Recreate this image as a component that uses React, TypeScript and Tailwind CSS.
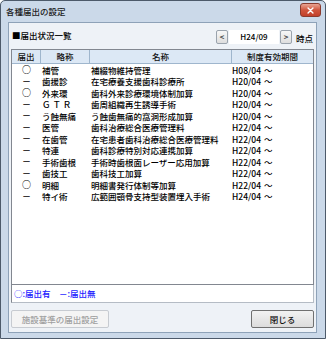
import React from "react";

type Row = { flag: "○" | "－"; abbr: string; name: string; since: string };

const ROWS: Row[] = [
  { flag: "○", abbr: "補管", name: "補綴物維持管理", since: "H08/04" },
  { flag: "－", abbr: "歯援診", name: "在宅療養支援歯科診療所", since: "H20/04" },
  { flag: "○", abbr: "外来環", name: "歯科外来診療環境体制加算", since: "H20/04" },
  { flag: "－", abbr: "Ｇ Ｔ Ｒ", name: "歯周組織再生誘導手術", since: "H20/04" },
  { flag: "－", abbr: "う蝕無痛", name: "う蝕歯無痛的窩洞形成加算", since: "H20/04" },
  { flag: "－", abbr: "医管", name: "歯科治療総合医療管理料", since: "H22/04" },
  { flag: "－", abbr: "在歯管", name: "在宅患者歯科治療総合医療管理料", since: "H22/04" },
  { flag: "－", abbr: "特連", name: "歯科診療特別対応連携加算", since: "H22/04" },
  { flag: "－", abbr: "手術歯根", name: "手術時歯根面レーザー応用加算", since: "H22/04" },
  { flag: "－", abbr: "歯技工", name: "歯科技工加算", since: "H22/04" },
  { flag: "○", abbr: "明細", name: "明細書発行体制等加算", since: "H22/04" },
  { flag: "－", abbr: "特イ術", name: "広範囲顎骨支持型装置埋入手術", since: "H24/04" },
];

// classic win7 push button
function WinButton({ label, disabled, className }: { label: string; disabled?: boolean; className?: string }) {
  return (
    <div
      className={`flex items-center justify-center rounded-[2px] border ${
        disabled
          ? "border-[#c7cbd1] bg-[#f4f4f4] text-[#a0a0a0]"
          : "border-[#707070] bg-gradient-to-b from-[#f2f2f2] to-[#dcdcdc] text-[#111]"
      } ${className ?? ""}`}
    >
      {label}
    </div>
  );
}

function ArrowButton({ dir }: { dir: "<" | ">" }) {
  return (
    <div className="flex h-[14px] w-[12px] items-center justify-center rounded-[2px] border border-[#9aa3ad] bg-gradient-to-b from-[#f7f7f7] to-[#dedede] text-[8px] leading-none text-[#333]">
      {dir}
    </div>
  );
}

export default function App() {
  return (
    <div className="h-[339px] w-[326px] overflow-hidden bg-white font-['Noto_Sans_CJK_JP','Liberation_Sans',sans-serif] text-[8.5px] font-medium leading-none text-black">
      <div className="flex h-[339px] w-[326px] flex-col rounded-t-[5px] border border-[#4d5a6a] bg-[#cbd9e9]">
        {/* title bar */}
        <div className="flex h-[21px] items-start justify-between pl-[5px] pr-[4px]">
          <span className="mt-[6px] text-[8.5px] text-[#1b1b1b]">各種届出の設定</span>
          <div className="mt-[2px] flex h-[14px] w-[21px] items-center justify-center rounded-[3px] border border-[#8a3b2e] bg-gradient-to-b from-[#e8a493] via-[#d0553d] to-[#c2402a]">
            <svg viewBox="0 0 10 10" className="h-[7px] w-[7px]">
              <path d="M1.5 1.5 L8.5 8.5 M8.5 1.5 L1.5 8.5" stroke="white" strokeWidth="2" strokeLinecap="round" />
            </svg>
          </div>
        </div>

        {/* client area */}
        <div className="ml-[7px] mr-[8px] flex flex-1 flex-col border border-[#8ea2b8] bg-[#eef2f7] px-[2px]">
          <div className="flex h-[26px] items-center justify-between">
            <span className="ml-[1px] mt-[-1px]">■届出状況一覧</span>
            <div className="mt-[2px] flex items-center">
              <ArrowButton dir="<" />
              <div className="mx-[1px] flex h-[14px] w-[50px] items-center justify-center bg-white text-[8px]">H24/09</div>
              <ArrowButton dir=">" />
              <span className="ml-[4px] mr-[1px] mt-[2px]">時点</span>
            </div>
          </div>

          {/* list view */}
          <div className="flex h-[236px] flex-col border border-[#828790] bg-white">
            <div className="flex h-[14px] border-b border-[#9fb6cd] bg-[#dce8f5] text-[#111]">
              <div className="flex w-[29px] items-center justify-center border-r border-[#9fb6cd]">届出</div>
              <div className="flex w-[49px] items-center justify-center border-r border-[#9fb6cd]">略称</div>
              <div className="flex w-[142px] items-center justify-center border-r border-[#9fb6cd]">名称</div>
              <div className="flex flex-1 items-center justify-center">制度有効期間</div>
            </div>
            <div className="flex flex-col">
              {ROWS.map((r) => (
                <div key={r.abbr} className="flex h-[11.5px] items-center">
                  <div className="flex w-[29px] justify-center text-[9px]">{r.flag}</div>
                  <div className="w-[49px] pl-[1px]">{r.abbr}</div>
                  <div className="w-[142px] pl-[1px]">{r.name}</div>
                  <div className="flex-1">
                    {r.since}
                    <span className="ml-[3px]">～</span>
                  </div>
                </div>
              ))}
            </div>
          </div>

          {/* legend */}
          <div className="flex h-[18px] items-center border border-t-0 border-[#b5bcc5] border-l-[#828790] bg-white pl-[2px] text-[#1a1aff]">
            ○:届出有　－:届出無
          </div>

          <div className="mt-[7px] flex justify-between">
            <WinButton label="施設基準の届出設定" disabled className="h-[18px] w-[98px]" />
            <WinButton label="閉じる" className="h-[18px] w-[63px]" />
          </div>
        </div>
        <div className="h-[5px]" />
      </div>
    </div>
  );
}
